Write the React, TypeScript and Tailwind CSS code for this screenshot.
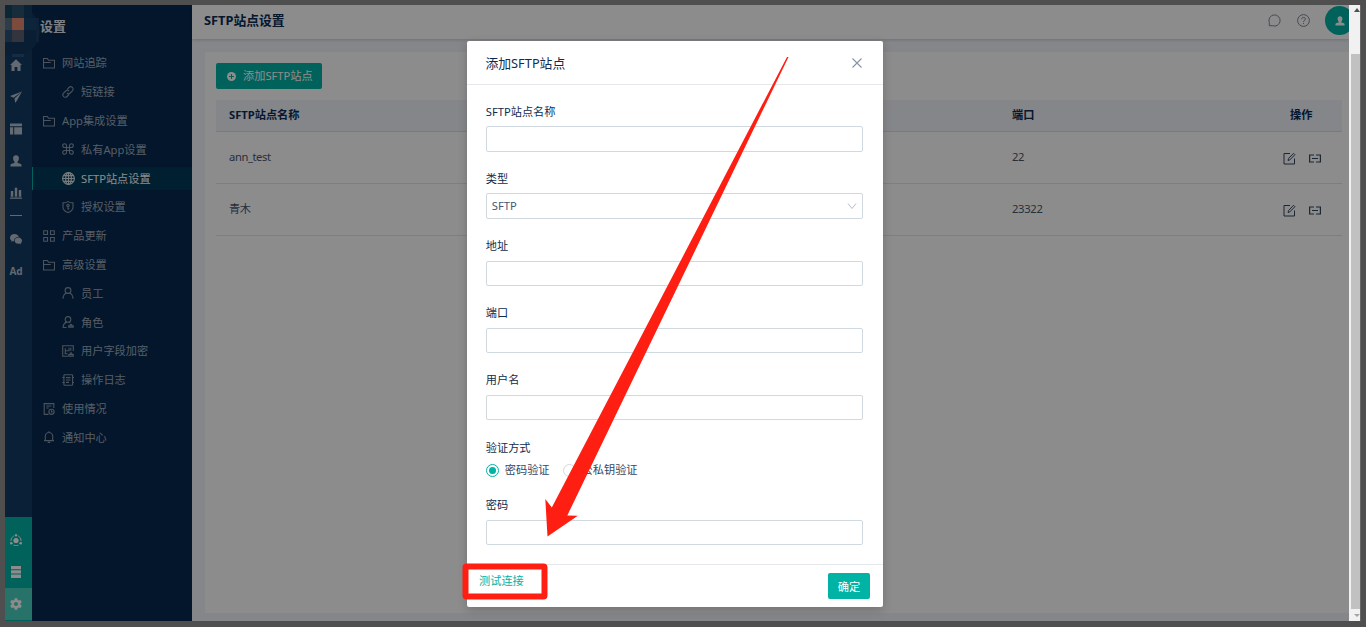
import type { ReactNode } from "react"

const Icon = ({ size = 12, fill, children }: { size?: number, fill?: boolean, children: ReactNode }) => (
  <svg
    width={size}
    height={size}
    viewBox="0 0 12 12"
    fill={fill ? "currentColor" : "none"}
    stroke={fill ? "none" : "currentColor"}
    strokeWidth={1.1}
    className="shrink-0"
  >
    {children}
  </svg>
)

const icons: Record<string, ReactNode> = {
  folder: <Icon><path d="M.5 11V1.500h3.800l1.200 1.800h6V11zM.5 5.500h7.300" /></Icon>,
  link: <Icon><path d="M5 3.600 7 1.500a2.300 2.300 0 0 1 3.400 3.300L8.200 7a2.300 2.300 0 0 1-3.300 0M7 8.500 5 10.500a2.300 2.300 0 0 1-3.400-3.300L3.800 5a2.300 2.300 0 0 1 3.300 0" /></Icon>,
  command: <Icon><path d="M4.500 4.500h3v3h-3zM4.500 4.500H2.700A1.900 1.900 0 1 1 4.500 2.700zM7.500 4.500V2.700a1.900 1.900 0 1 1 1.800 1.800zM7.500 7.500h1.800a1.900 1.900 0 1 1-1.800 1.800zM4.500 7.500v1.800a1.900 1.900 0 1 1-1.800-1.800z" /></Icon>,
  globe: <Icon size={13}><circle cx="6" cy="6" r="5.400" /><ellipse cx="6" cy="6" rx="2.600" ry="5.400" /><path d="M6 .6v10.800M.6 6h10.800M1.400 3.300h9.200M1.400 8.700h9.200" /></Icon>,
  shield: <Icon><path d="M1 1.900c2 0 3.500-.4 5-1.300 1.500.9 3 1.300 5 1.300v4.300c0 2.500-2 4.200-5 5.400C3 10.400 1 8.700 1 6.200z" /><circle cx="6" cy="4.600" r="1.200" /><path d="M6 5.800v3M6 7.600h1.200" /></Icon>,
  grid: <Icon><path d="M.7.7h3.800v3.800H.7zM7.500.7h3.800v3.800H7.500zM.7 7.500h3.800v3.800H.7zM7.500 7.500h3.800v3.800H7.500z" /></Icon>,
  user: <Icon><circle cx="6" cy="3.500" r="2.900" /><path d="M1 11.800C1.100 8.500 2.800 6.600 4.700 6M11 11.800C10.900 8.500 9.200 6.600 7.300 6" /></Icon>,
  role: <Icon><circle cx="6" cy="3.400" r="2.800" /><path d="M1 11.800c.1-3.200 1.700-5.100 3.700-5.700M7.200 6.100l1 .6M6.700 11.200h4.500V9.900H6.700zM8 9.900c0-1 .2-1.600 1-1.600s1 .6 1 1.600M1 11.500h3.500" /></Icon>,
  encrypt: <Icon><path d="M11.300 6V.7H.7v10.600H6M3.300 3.200v5.200M3.300 5.800h3M7 2.800v3.500M8.800 2.800v3M6.800 11.200h4.500V9.600H6.800zM8 9.400c0-2 2-2 2 0M2.500 8.700h3" /></Icon>,
  log: <Icon><rect x="1.900" y=".7" width="8.700" height="10.600" rx=".8" /><path d="M4 3.600h4.500M4 6h4.500M4 8.400h3M.3 3.500h2.200M.3 8.500h2.200M10 3.500h1.900M10 8.500h1.900" /></Icon>,
  usage: <Icon><path d="M5.500 11.400H1.200V.6h9.600V5M3.300 3h5M3.300 5h2.500" /><circle cx="8.500" cy="8.800" r="2.600" /><path d="M8.500 7.300v1.700h1.300" /></Icon>,
  bell: <Icon><path d="M6 .3v1.200M1 9.600h10M2.300 9.500V5.200a3.700 3.700 0 0 1 7.400 0v4.300M4.700 11.400h2.600" /></Icon>,
}

const person = <path d="M6 .3c1.900 0 2.900 1.300 2.900 3S8 6.400 7.500 6.900v1c1.900.3 4 .9 4 2.200v1.400H.5v-1.400c0-1.300 2.100-1.900 4-2.200v-1C4 6.400 3.100 5 3.100 3.300s1-3 2.900-3z" />

const railIcons: ReactNode[] = [
  <Icon fill><path d="M6 .2 12 6h-1.500v6H7.400V8H4.600v4H1.500V6H0z" /></Icon>,
  <Icon fill><path d="M12 .5 0 5l3.500 1.700zM12 .5 4.500 7.400 5.200 12l1.800-2.600z" /></Icon>,
  <Icon fill><path d="M0 .5h12v2.700H0zM0 4.200h3.200v7.300H0zM4.200 4.200H12v7.300H4.200z" /></Icon>,
  <Icon fill>{person}</Icon>,
  <Icon fill><path d="M.8 4h2.400v5.700H.8zM4.800.8h2.400v8.900H4.800zM8.800 3h2.400v6.700H8.800zM0 10.500h12v1.200H0z" /></Icon>,
]

const menu = [
  { label: "网站追踪", icon: "folder" },
  { label: "短链接", icon: "link", child: true },
  { label: "App集成设置", icon: "folder" },
  { label: "私有App设置", icon: "command", child: true },
  { label: "SFTP站点设置", icon: "globe", child: true, active: true },
  { label: "授权设置", icon: "shield", child: true },
  { label: "产品更新", icon: "grid" },
  { label: "高级设置", icon: "folder" },
  { label: "员工", icon: "user", child: true },
  { label: "角色", icon: "role", child: true },
  { label: "用户字段加密", icon: "encrypt", child: true },
  { label: "操作日志", icon: "log", child: true },
  { label: "使用情况", icon: "usage" },
  { label: "通知中心", icon: "bell" },
]

const sites = [
  { name: "ann_test", port: "22" },
  { name: "青木", port: "23322" },
]

const Rail = () => (
  <div className="flex w-[27px] shrink-0 flex-col items-center bg-[#123b63] text-[#b4bfcc]">
    <div className="h-[44px] shrink-0" />
    {railIcons.map((icon, i) => (
      <div key={i} className="flex h-8 shrink-0 items-center pr-[5px]">{icon}</div>
    ))}
    <div className="mt-[6px] mr-[5px] h-px w-3 shrink-0 bg-[#b4bfcc]" />
    <div className="mt-[7px] flex h-8 shrink-0 items-center pr-[5px]">
      <Icon fill>
        <path d="M4.500 1C2 1 0 2.700 0 4.700c0 1.200.6 2.200 1.600 2.900L1.200 9l1.700-.9c.4.100.8.200 1.300.2C3.900 5.600 6 3.900 8.800 4 8.300 2.200 6.500 1 4.500 1z" />
        <path d="M8.400 4.600c-2.100 0-3.700 1.400-3.700 3.100s1.600 3.100 3.700 3.100c.4 0 .8-.1 1.200-.2l1.400.8-.3-1.200c.8-.6 1.300-1.500 1.300-2.500 0-1.700-1.600-3.100-3.600-3.100z" />
      </Icon>
    </div>
    <div className="mr-[5px] flex h-8 shrink-0 items-center text-[10px] font-bold">Ad</div>
    <div className="mt-auto flex h-[71px] w-full flex-col items-center bg-[#00b3a5] pt-[7px] text-white">
      <div className="flex h-8 items-center pr-[5px]">
        <Icon fill>
          <circle cx="6" cy="6.500" r="2.600" />
          <circle cx="6" cy="1.200" r="1.200" />
          <circle cx="1.300" cy="9.300" r="1.300" />
          <circle cx="10.700" cy="9.300" r="1.300" />
          <path d="M3.800 1.900A5.200 5.200 0 0 0 .9 7M8.200 1.900A5.200 5.200 0 0 1 11.100 7M3.500 11.200a5.200 5.200 0 0 0 5 0" fill="none" stroke="currentColor" strokeWidth=".9" />
        </Icon>
      </div>
      <div className="flex h-8 items-center pr-[5px]">
        <Icon fill><path d="M1 0h10v3.300H1zM1 4.300h10v3.300H1zM1 8.600h10V12H1z" /></Icon>
      </div>
    </div>
    <div className="flex h-8 w-full shrink-0 items-center justify-center bg-[#47d0c0] pr-[5px] text-white">
      <svg width="14" height="14" viewBox="0 0 24 24" fill="currentColor">
        <path d="M19.430 12.980c.04-.32.070-.64.070-.98s-.03-.66-.07-.98l2.110-1.650c.19-.15.240-.42.120-.64l-2-3.460c-.12-.22-.39-.3-.61-.22l-2.490 1c-.52-.4-1.080-.73-1.690-.98l-.38-2.650A.49.490 0 0 0 14 2h-4c-.25 0-.46.180-.49.420l-.38 2.650c-.61.250-1.170.590-1.690.980l-2.490-1c-.23-.09-.49 0-.61.220l-2 3.460c-.13.220-.07.490.120.640l2.110 1.650c-.04.320-.07.650-.07.980s.03.660.070.980l-2.110 1.650c-.19.150-.24.420-.12.640l2 3.460c.12.220.39.300.61.220l2.490-1c.52.400 1.080.730 1.690.980l.38 2.650c.03.240.240.420.490.420h4c.25 0 .46-.18.490-.42l.38-2.650c.61-.25 1.170-.59 1.690-.98l2.490 1c.23.090.490 0 .61-.22l2-3.460c.12-.22.070-.49-.12-.64zM12 15.500a3.500 3.500 0 1 1 0-7 3.500 3.500 0 0 1 0 7z" />
      </svg>
    </div>
    <div className="h-px w-full shrink-0 bg-[#00b3a5]" />
  </div>
)

const Sidebar = () => (
  <nav className="w-40 shrink-0 bg-[#072950] text-[#9eabbb]">
    <h2 className="h-[46.500px] pt-[11px] pl-[8px] text-[13px] leading-5 font-bold text-[#e6eaf0]">设置</h2>
    <div className="flex flex-col gap-[5.800px]">
      {menu.map((item) => (
        <div
          key={item.label}
          className={`flex h-[23px] items-center gap-[7px] border-l ${item.child ? "pl-[29px]" : "pl-[10px]"} ${item.active ? "border-[#00b3a5] bg-[#003b5c] text-white" : "border-transparent"}`}
        >
          <span className="flex w-3 justify-center opacity-85">{icons[item.icon]}</span>
          <span className="pt-[1.500px] whitespace-nowrap">{item.label}</span>
        </div>
      ))}
    </div>
  </nav>
)

const RowActions = () => (
  <div className="flex gap-[13px] pt-[2px] text-[#33475f]">
    <svg width="13" height="13" viewBox="0 0 13 13" fill="none" stroke="currentColor" strokeWidth="1">
      <path d="M7 1.500H1v10.500h10.500V6.500M5 8.500l.5-2 5-5.200 1.400 1.400-5.100 5.200z" />
    </svg>
    <svg width="12" height="13" viewBox="0 0 12 13" fill="none" stroke="currentColor" strokeWidth="1.200">
      <path d="M5 3H.6v7H5M7 3h4.400v7H7M3 6.500h6" />
    </svg>
  </div>
)

const Page = () => (
  <main className="flex min-w-0 flex-1 flex-col bg-[#f0f4fa]">
    <header className="z-10 flex h-[34px] shrink-0 items-start justify-between bg-white pl-3 shadow-[0_1px_3px_rgba(0,30,60,0.18)]">
      <h1 className="pt-[5px] text-[12.800px] leading-5 font-bold text-[#0a2c55]">SFTP站点设置</h1>
      <div className="flex text-[#7787a0]">
        <svg width="13" height="13" viewBox="0 0 13 13" fill="none" stroke="currentColor" className="mt-[9px] mr-4">
          <path d="M1.300 11.700V8.500A5.600 5.600 0 1 1 4.500 11.700z" />
        </svg>
        <svg width="13" height="13" viewBox="0 0 13 13" fill="none" stroke="currentColor" className="mt-[9px] mr-[15px]">
          <circle cx="6.500" cy="6.500" r="5.900" />
          <path d="M4.700 5.200c0-2.500 3.700-2.300 3.700-.2 0 1.300-1.900 1.400-1.900 2.900M6.500 9v1" />
        </svg>
        <div className="h-[31px] w-6 overflow-hidden pt-px">
          <div className="flex size-[29px] items-center justify-center rounded-full bg-[#00b3a5] text-white">
            <Icon size={10} fill>{person}</Icon>
          </div>
        </div>
      </div>
    </header>
    <section className="mt-[13px] mb-2 ml-[13px] flex-1 bg-white pt-[11px] pr-[7px] pl-[11px]">
      <button className="flex h-[26px] w-[106px] items-center gap-[7px] rounded-[2px] bg-[#00b3a5] pl-[11px] text-white">
        <svg width="9" height="9" viewBox="0 0 9 9">
          <circle cx="4.500" cy="4.500" r="4.500" fill="currentColor" />
          <path d="M4.500 2v5M2 4.500h5" stroke="#00b3a5" />
        </svg>
        <span className="whitespace-nowrap">添加SFTP站点</span>
      </button>
      <table className="mt-[11px] w-full table-fixed border-collapse text-left text-[#445871]">
        <thead>
          <tr className="h-[31px] border-b border-[#dbe0e8] bg-[#f0f4fa] text-[#0a2c55]">
            <th className="w-[783px] pt-px pl-[13px] font-bold">SFTP站点名称</th>
            <th className="pt-px pl-[13px] font-bold">端口</th>
            <th className="w-[66px] pt-px pl-[14px] font-bold">操作</th>
          </tr>
        </thead>
        <tbody>
          {sites.map((site) => (
            <tr key={site.name} className="h-[52px] border-b border-[#e2e6ec]">
              <td className="pl-[13px] tracking-[-0.400px]">{site.name}</td>
              <td className="pl-[13px] tracking-[-0.300px]">{site.port}</td>
              <td className="pl-[7px]"><RowActions /></td>
            </tr>
          ))}
        </tbody>
      </table>
    </section>
  </main>
)

const Scrollbar = () => (
  <div className="relative z-30 flex w-3 shrink-0 flex-col border-r border-[#666] bg-[#f1f1f1]">
    <div className="mt-[3px] ml-[5px] h-0 w-0 border-x-[3px] border-b-4 border-x-transparent border-b-[#505050]" />
    <div className="mt-[42px] ml-[2px] flex-1 bg-[#c1c1c1]" />
    <div className="flex h-3 items-center pl-[5px]">
      <div className="h-0 w-0 border-x-[3px] border-t-[3px] border-x-transparent border-t-[#a3a3a3]" />
    </div>
  </div>
)

const Field = ({ label, children }: { label: string, children?: ReactNode }) => (
  <div className="mb-[17.200px] h-[50px]">
    <label className="block h-6 pt-[0.450px] leading-[18px] text-[#0f2c4d]">{label}</label>
    <div className="flex h-[25.400px] items-center justify-between rounded-[2px] border border-[#d1d9e0] px-[5px] text-[#445871]">{children}</div>
  </div>
)

const Radio = ({ label, checked }: { label: string, checked?: boolean }) => (
  <div className="flex items-center gap-[6px]">
    <span className={`flex size-[13px] items-center justify-center rounded-full border ${checked ? "border-[#00b3a5]" : "border-[#d1d9e0]"}`}>
      {checked && <span className="size-[7px] rounded-full bg-[#00b3a5]" />}
    </span>
    <span>{label}</span>
  </div>
)

const SiteModal = () => (
  <div className="absolute top-[41px] left-[467px] z-20 flex h-[566px] w-[416px] flex-col rounded-[2px] bg-white shadow-[0_3px_10px_rgba(0,0,0,0.18)]">
    <div className="flex h-11 shrink-0 items-center justify-between border-b border-[#e4e8ec] pt-px pr-[21px] pl-[18.500px]">
      <h3 className="pt-px text-[12.800px] text-[#0f2c4d]">添加SFTP站点</h3>
      <svg width="10" height="10" viewBox="0 0 10 10" stroke="#8493a8" strokeWidth="1.100"><path d="m.5.500 9 9M9.500.500l-9 9" /></svg>
    </div>
    <div className="flex-1 pt-[17.200px] pr-5 pl-[18.800px]">
      <Field label="SFTP站点名称" />
      <Field label="类型">
        <span>SFTP</span>
        <svg width="10" height="6" viewBox="0 0 10 6" fill="none" stroke="#b4bdc9"><path d="m1 .5 4 5 4-5" /></svg>
      </Field>
      <Field label="地址" />
      <Field label="端口" />
      <Field label="用户名" />
      <div className="h-[57.800px] pt-[1px]">
        <label className="block leading-[18px] text-[#0f2c4d]">验证方式</label>
        <div className="mt-[5px] flex gap-[13px] text-[#33475f]">
          <Radio label="密码验证" checked />
          <Radio label="公私钥验证" />
        </div>
      </div>
      <Field label="密码" />
    </div>
    <div className="flex h-[43px] shrink-0 items-start justify-between border-t border-[#e4e8ec] pr-[13px] pl-3">
      <span className="pt-[7px] leading-[18px] text-[#00b3a5]">测试连接</span>
      <button className="mt-2 h-[26px] w-[42px] rounded-[2px] bg-[#00b3a5] pt-[3px] text-white">确定</button>
    </div>
  </div>
)

// blurred out brand mark in the top corner
const Logo = () => (
  <svg className="absolute top-[5px] left-[5px] z-20" width="36" height="52" viewBox="5 5 36 52">
    <circle cx="15" cy="31" r="25" fill="#0a1e33" />
    <path d="M5 5h7v13H5z" fill="#0c2636" />
    <path d="M12 5h12v13H12z" fill="#182d3b" />
    <path d="M24 5h8v13h-8z" fill="#0b2136" />
    <path d="M5 18h7v12H5z" fill="#2b3e4a" />
    <path d="M12 18h12v12H12z" fill="#7c4b3b" />
    <path d="M24 18h12v12H24z" fill="#0d253b" />
    <path d="M5 30h7v12H5z" fill="#172c40" />
    <path d="M12 30h12v12H12z" fill="#34343f" />
    <path d="M36 18h3v24h-3z" fill="#0e2136" />
    <path d="M12 54h12v3H12z" fill="#152c42" />
  </svg>
)

const Annotation = () => (
  <svg className="absolute inset-0 z-40" width="1366" height="627" viewBox="0 0 1366 627" fill="#ff1f12">
    <path d="M788.500 57 567.300 515.500l10.500.3L547.500 536.500 545.300 499l6.500 8.500L787 57z" />
    <rect x="465.500" y="566.500" width="79" height="30" rx="1" fill="none" stroke="#ff1f12" strokeWidth="6" strokeLinejoin="round" />
  </svg>
)

export default function App() {
  return (
    <div className="relative flex h-[627px] w-[1366px] overflow-hidden border-t-[5px] border-r-[5px] border-b-[6px] border-l-[5px] border-[#4f4f4f] font-['Noto_Sans','Noto_Sans_CJK_SC',sans-serif] text-[11.200px]">
      <Rail />
      <Sidebar />
      <Page />
      <Scrollbar />
      <div className="absolute inset-0 z-10 bg-black/45" />
      <div className="absolute -top-[5px] -left-[5px] z-20 h-[627px] w-[1366px]">
        <Logo />
        <SiteModal />
        <Annotation />
      </div>
    </div>
  )
}
